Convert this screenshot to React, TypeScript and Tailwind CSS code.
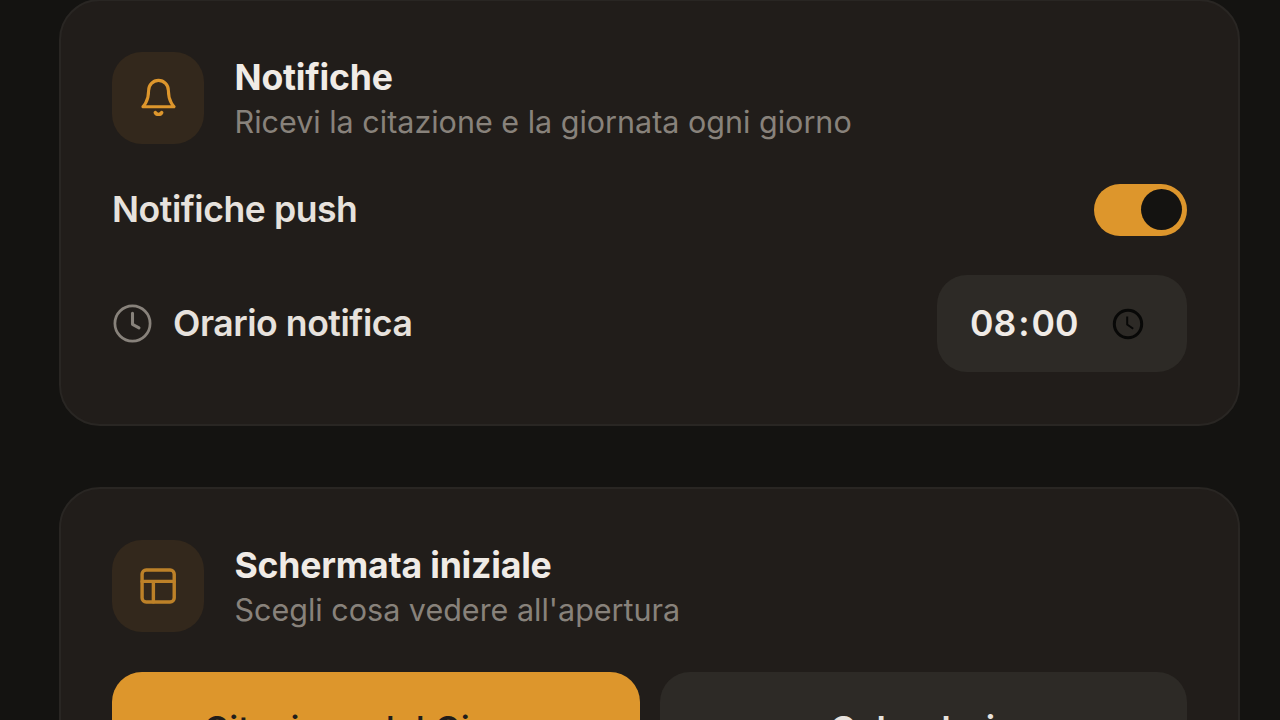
import { useState } from "react";

interface SettingsCardProps {
  title: string;
  description: string;
  icon: React.ReactNode;
  className: string;
  children: React.ReactNode;
}

function SettingsCard({ title, description, icon, className, children }: SettingsCardProps) {
  return (
    <section
      className={`w-[1181px] shrink-0 rounded-[41px] border-2 border-[#292623] bg-[#211d1a] px-[51px] pt-[51px] ${className}`}
    >
      <div className="flex h-[92px] items-center gap-[30.5px]">
        <div className="flex size-[92px] shrink-0 items-center justify-center rounded-[30px] bg-[#33281c] text-[#dd962c]">
          {icon}
        </div>
        <div>
          <h3 className="h-[49px] text-[35.6px] leading-[50px] font-bold tracking-[-0.2px] whitespace-nowrap text-[#f0ebe6]">
            {title}
          </h3>
          <p className="h-[41px] text-[30.5px] leading-[40px] whitespace-nowrap text-[#88827b]">
            {description}
          </p>
        </div>
      </div>
      {children}
    </section>
  );
}

function BellIcon() {
  return (
    <svg width="41" height="41" viewBox="0 0 24 24" fill="none" stroke="currentColor" strokeWidth="1.8" strokeLinecap="round" strokeLinejoin="round">
      <path d="M6.2 7.4a5.8 6 0 0 1 11.6 0c0 6.4 3.3 9.4 3.3 9.4H2.9s3.3-3 3.3-9.4" />
      <path d="M10.1 20.2a2 1.6 0 0 0 3.8 0" strokeWidth="2" />
    </svg>
  );
}

function LayoutIcon() {
  return (
    <svg width="41" height="41" viewBox="0 0 24 24" fill="none" stroke="#bd8128" strokeWidth="2" strokeLinecap="round" strokeLinejoin="round">
      <rect x="2.4" y="2.3" width="18.8" height="18.8" rx="2.4" />
      <path d="M2.4 9h18.8M9 21V9" />
    </svg>
  );
}

function ClockIcon() {
  return (
    <svg width="41" height="41" viewBox="0 0 24 24" fill="none" stroke="#88827b" strokeWidth="1.6" strokeLinecap="round" strokeLinejoin="round">
      <circle cx="12" cy="12" r="10.3" />
      <path d="M12 6v6.5l3.8 2" strokeWidth="1.8" />
    </svg>
  );
}

function PickerIcon() {
  return (
    <svg width="32" height="32" viewBox="0 0 32 32" fill="none" stroke="#080807">
      <circle cx="16" cy="16" r="13.7" strokeWidth="3" />
      <path d="M15.2 8.5v8l6 4.2" strokeWidth="2" />
    </svg>
  );
}

export default function App() {
  const [push, setPush] = useState(true);

  return (
    <main className="flex h-[720px] w-[1280px] flex-col gap-[61px] overflow-hidden bg-[#141311] pl-[59px] font-['Inter',sans-serif]">
      <SettingsCard
        title="Notifiche"
        description="Ricevi la citazione e la giornata ogni giorno"
        icon={<BellIcon />}
        className="-mt-[1px] h-[427px]"
      >
        <div className="mt-[39px] flex h-[53px] items-center justify-between">
          <span className="text-[35.6px] leading-[52px] font-semibold tracking-[-0.45px] text-[#e7e2dd]">
            Notifiche push
          </span>
          <button
            type="button"
            role="switch"
            aria-checked={push}
            onClick={() => setPush(!push)}
            className={`flex h-[52px] w-[93px] items-center rounded-full p-[5px] ${push ? "justify-end bg-[#dd962c]" : "justify-start bg-[#2d2a26]"}`}
          >
            <span className="size-[41px] rounded-full bg-[#141311]" />
          </button>
        </div>
        <div className="mt-[39px] flex h-[97px] items-center justify-between">
          <div className="flex items-center gap-[20px]">
            <ClockIcon />
            <span className="text-[35.6px] leading-[52px] font-semibold tracking-[-0.45px] text-[#e7e2dd]">
              Orario notifica
            </span>
          </div>
          <div className="flex h-[97px] w-[250px] items-center justify-between rounded-[30px] bg-[#2d2a26] pr-[43px] pl-[33px]">
            <span className="flex text-[35.6px] leading-[52px] font-semibold text-[#f0ebe6]">
              <span>08</span>
              <span className="px-[2px]">:</span>
              <span>00</span>
            </span>
            <PickerIcon />
          </div>
        </div>
      </SettingsCard>

      <SettingsCard
        title="Schermata iniziale"
        description="Scegli cosa vedere all'apertura"
        icon={<LayoutIcon />}
        className="h-[330px]"
      >
        <div className="mt-[40px] grid grid-cols-2 gap-[20px] text-center text-[35.6px] leading-[52px]">
          <button type="button" className="h-[116px] rounded-[30px] bg-[#dd962c] font-medium text-[#211d1a]">
            Citazione del Giorno
          </button>
          <button type="button" className="h-[116px] rounded-[30px] bg-[#2d2a26] font-semibold text-[#e7e2dd]">
            Calendario
          </button>
        </div>
      </SettingsCard>
    </main>
  );
}
